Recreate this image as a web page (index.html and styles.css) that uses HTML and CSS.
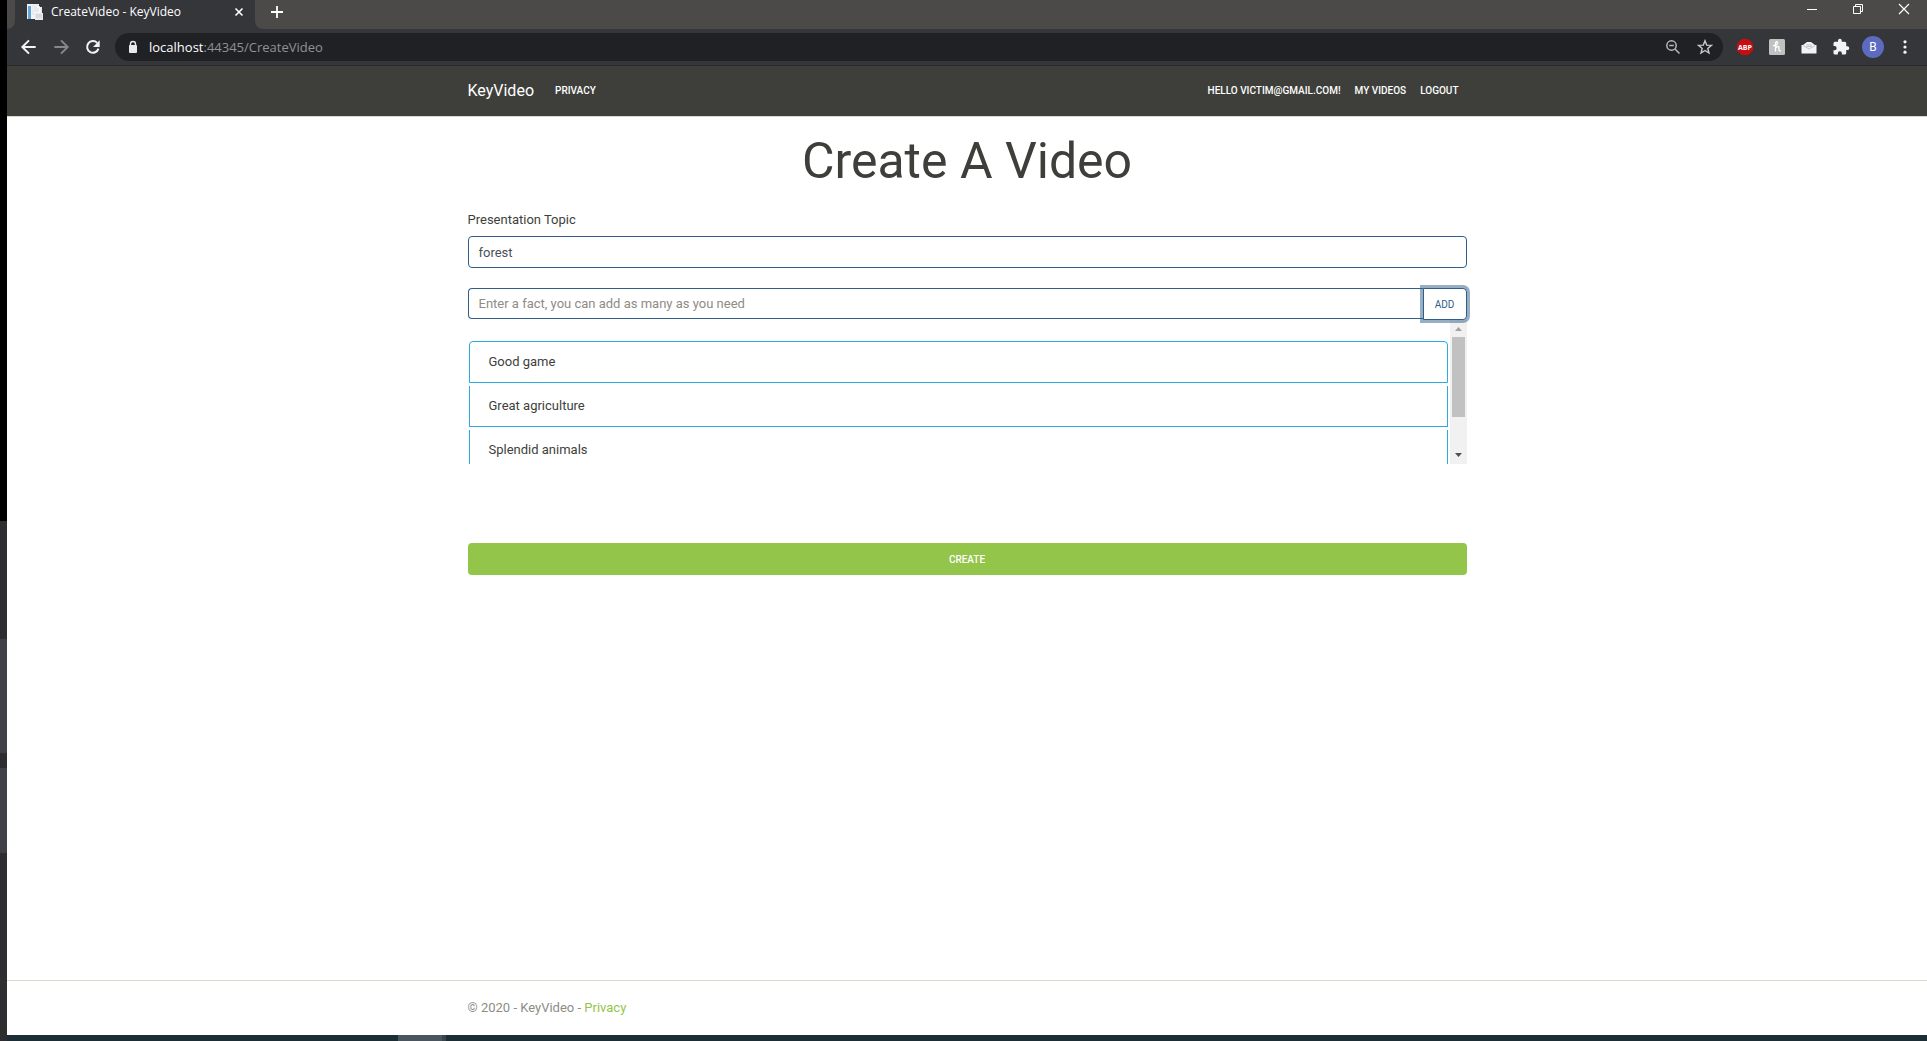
FILE: index.html
```
<!DOCTYPE html>
<html lang="en">
<head>
<meta charset="UTF-8" />
<meta name="viewport" content="width=device-width, initial-scale=1" />
<title>CreateVideo - KeyVideo</title>
<link rel="stylesheet" href="styles.css">
</head>
<body>
  <div class="desktop-edge">
    <span class="edge-black"></span>
    <span class="edge-dark"></span>
    <span class="edge-light"></span>
    <span class="edge-gap"></span>
    <span class="edge-lower"></span>
  </div>

  <div class="window">
    <!-- tab strip -->
    <div class="tab-strip">
      <div class="tab-left"></div>
      <div class="tab">
        <svg width="16" height="16" viewBox="0 0 16 16" aria-hidden="true">
          <path d="M0 0h12v3h3v12H0z" fill="#f1f3f4"/>
          <path d="M1 2h3v13H1z" fill="#5fa8d8"/>
          <path d="M6 1h5l3 3v6H6z" fill="#fafafa" stroke="#d5dade" stroke-width=".6"/>
          <path d="M7 3h3M7 5h5M7 7h5" stroke="#d5dade"/>
          <path d="M8 9h8v7H8z" fill="#e5e9ed"/>
          <path d="M9 11h6M9 13h6" stroke="#c9d0d6"/>
        </svg>
        <span class="tab-title">CreateVideo - KeyVideo</span>
        <button class="tab-close" aria-label="Close tab">
          <svg width="16" height="16" viewBox="0 0 16 16"><path d="M4.500 4.500l7 7M11.500 4.500l-7 7" stroke="#fff" stroke-width="1.600"/></svg>
        </button>
      </div>
      <div class="tab-rest">
        <button class="new-tab" aria-label="New tab">
          <svg width="16" height="16" viewBox="0 0 16 16"><path d="M8 2v12M2 8h12" stroke="#fff" stroke-width="1.800"/></svg>
        </button>
        <div class="window-buttons">
          <button aria-label="Minimize"><svg width="12" height="12" viewBox="0 0 12 12"><path d="M1 6.500h10" stroke="#fff"/></svg></button>
          <button aria-label="Restore"><svg width="12" height="12" viewBox="0 0 12 12" fill="none" stroke="#fff"><path d="M1.500 3.500h7v7h-7zM3.500 3.500v-2h7v7h-2"/></svg></button>
          <button aria-label="Close"><svg width="12" height="12" viewBox="0 0 12 12"><path d="M1 1l10 10M11 1L1 11" stroke="#fff" stroke-width="1.200"/></svg></button>
        </div>
      </div>
    </div>

    <!-- toolbar -->
    <div class="toolbar">
      <button class="icon-btn" aria-label="Back">
        <svg width="20" height="20" viewBox="0 0 24 24" fill="none" stroke="#f1f3f4" stroke-width="2.400"><path d="M20 12H5M12 4l-8 8 8 8"/></svg>
      </button>
      <button class="icon-btn" aria-label="Forward">
        <svg width="20" height="20" viewBox="0 0 24 24" fill="none" stroke="#85878a" stroke-width="2.400"><path d="M4 12h15M12 4l8 8-8 8"/></svg>
      </button>
      <button class="icon-btn" aria-label="Reload">
        <svg width="20" height="20" viewBox="0 0 24 24"><path d="M17 7a7 7 0 1 0 1.600 7" fill="none" stroke="#f1f3f4" stroke-width="2.400"/><path d="M20 4v8h-8z" fill="#f1f3f4"/></svg>
      </button>
      <div class="omnibox">
        <svg width="12" height="14" viewBox="0 0 12 14" aria-hidden="true"><path d="M3.500 6V4a2.500 2.500 0 0 1 5 0v2" fill="none" stroke="#e8eaed" stroke-width="1.400"/><rect x="2" y="5" width="8" height="8" rx="1" fill="#e8eaed"/></svg>
        <span class="url">localhost<span class="url-path">:44345/CreateVideo</span></span>
        <button class="icon-btn" aria-label="Zoom">
          <svg width="16" height="16" viewBox="0 0 16 16" fill="none" stroke="#b5b7ba" stroke-width="1.500"><circle cx="6.500" cy="6.500" r="4.700"/><path d="M10 10l4.500 4.500M4.200 6.500h4.600"/></svg>
        </button>
        <button class="icon-btn" aria-label="Bookmark">
          <svg width="16" height="16" viewBox="0 0 16 16" fill="none" stroke="#c7c9cc" stroke-width="1.400"><path d="M8 1.800l1.700 4.300 4.700.3-3.600 3 1.200 4.600L8 11.500 4 14l1.200-4.600-3.600-3 4.700-.3z"/></svg>
        </button>
      </div>
      <button class="icon-btn" aria-label="ABP">
        <svg width="16" height="16" viewBox="0 0 16 16"><path d="M4.700 0h6.600L16 4.700v6.600L11.300 16H4.700L0 11.300V4.700z" fill="#c70d11"/><text class="abp-text" x="8" y="11" text-anchor="middle" fill="#fff">ABP</text></svg>
      </button>
      <button class="icon-btn" aria-label="Honey">
        <svg width="16" height="16" viewBox="0 0 16 16"><rect width="16" height="16" rx="1.500" fill="#c1c1c1"/><path d="M4 6.500c2.500.5 5-1 4.500-3-.5-1.300-2-.8-2 .8v8.200M6.500 9c1.500-2 3.800-2 3.500 0-.3 1.800-.3 3.500 2 2.800" fill="none" stroke="#fff" stroke-width="1.300"/></svg>
      </button>
      <button class="icon-btn" aria-label="Mail">
        <svg width="16" height="16" viewBox="0 0 16 16"><path d="M.5 6h1.500L6 3h4l4 3h1.500v8.500H.5z" fill="#f1f3f4"/><path d="M2 6.500l6 3.500 6-3.500M5 6h6M5.500 7.500h5" fill="none" stroke="#c3c5c7"/></svg>
      </button>
      <button class="icon-btn" aria-label="Extensions">
        <svg width="18" height="18" viewBox="0 0 24 24"><path d="M20.500 11H19V7a2 2 0 0 0-2-2h-4V3.500a2.500 2.500 0 0 0-5 0V5H4a2 2 0 0 0-2 2v3.800h1.500a2.700 2.700 0 0 1 0 5.400H2V20a2 2 0 0 0 2 2h3.800v-1.500a2.700 2.700 0 0 1 5.400 0V22H17a2 2 0 0 0 2-2v-4h1.500a2.500 2.500 0 0 0 0-5z" fill="#f1f3f4"/></svg>
      </button>
      <button class="icon-btn" aria-label="Profile"><span class="avatar">B</span></button>
      <button class="icon-btn" aria-label="Menu">
        <svg width="16" height="16" viewBox="0 0 16 16" fill="#f1f3f4"><circle cx="8" cy="2.800" r="1.600"/><circle cx="8" cy="8" r="1.600"/><circle cx="8" cy="13.200" r="1.600"/></svg>
      </button>
    </div>

    <header class="navbar">
      <nav class="container nav-row">
        <a class="brand" href="#">KeyVideo</a>
        <a class="nav-link" href="#">Privacy</a>
        <div class="nav-user">
          <a class="nav-link" href="#">Hello victim@gmail.com!</a>
          <a class="nav-link" href="#">My Videos</a>
          <button class="nav-link" type="submit">Logout</button>
        </div>
      </nav>
    </header>

    <main class="container">
      <h1>Create A Video</h1>
      <form>
        <label for="topic">Presentation Topic</label>
        <input class="form-control" id="topic" type="text" value="forest">
        <div class="input-group">
          <input class="form-control" id="fact" type="text" aria-label="Fact" placeholder="Enter a fact, you can add as many as you need">
          <button class="btn-add" type="button">Add</button>
        </div>
        <div class="facts">
          <ul class="fact-list">
            <li>Good game</li>
            <li>Great agriculture</li>
            <li>Splendid animals</li>
          </ul>
          <div class="scrollbar" aria-hidden="true">
            <svg width="17" height="17" viewBox="0 0 17 17"><path d="M5 11h7L8.500 7z" fill="#a3a3a3"/></svg>
            <div class="scroll-thumb"></div>
            <svg width="17" height="17" viewBox="0 0 17 17"><path d="M5 6h7l-3.500 4z" fill="#505050"/></svg>
          </div>
        </div>
        <button class="btn-create" type="submit">Create</button>
      </form>
    </main>

    <footer class="footer">
      <div class="container">&copy; 2020 - KeyVideo - <a href="#">Privacy</a></div>
    </footer>

    <div class="taskbar"><span class="taskbar-item"></span></div>
  </div>
</body>
</html>
```
FILE: styles.css
```
:root {
  --color-primary: #325d88;
  --color-success: #93c54b;
  --color-info: #29abe0;
  --color-dark: #3e3f3a;
  --color-muted: #8e8c84;
  --color-frame: #4c4a48;
  --color-toolbar: #35363a;
  --font-family: Roboto, "Liberation Sans", sans-serif;
  --font-system: "Open Sans", "Noto Sans", sans-serif;
}

* {
  box-sizing: border-box;
}

body {
  margin: 0;
  min-height: 100vh;
  display: flex;
  background: #fff;
  font-family: var(--font-family);
  font-size: 13px;
  line-height: 20px;
  color: var(--color-dark);
}

button {
  margin: 0;
  padding: 0;
  border: 0;
  background: none;
  font-family: inherit;
  cursor: pointer;
}

svg {
  display: block;
  flex: none;
}

/* windows lying behind the browser */
.desktop-edge {
  width: 7px;
  flex: none;
  display: flex;
  flex-direction: column;
  background: #2e2e30;
}

.edge-black {
  height: 50vh;
  background: #000;
}

.edge-dark {
  height: 118px;
}

.edge-light {
  height: 114px;
  background: #404146;
}

.edge-gap {
  height: 15px;
}

.edge-lower {
  height: 85px;
  background: #404146;
}

.window {
  flex: 1;
  min-width: 0;
  display: flex;
  flex-direction: column;
}

/* browser frame */
.tab-strip {
  display: flex;
  height: 29px;
  background: var(--color-toolbar);
}

.tab-left {
  width: 8px;
  background: var(--color-frame);
  border-bottom-right-radius: 8px;
}

.tab {
  width: 240px;
  display: flex;
  align-items: center;
  padding: 0 8px 5px 12px;
}

.tab-title {
  flex: 1;
  margin-left: 8px;
  font-family: var(--font-system);
  font-size: 12px;
  white-space: nowrap;
  color: #fff;
}

.tab-rest {
  flex: 1;
  display: flex;
  justify-content: space-between;
  align-items: flex-start;
  padding-left: 14px;
  background: var(--color-frame);
  border-bottom-left-radius: 8px;
}

.new-tab {
  padding-top: 4px;
}

.window-buttons {
  display: flex;
}

.window-buttons button {
  width: 46px;
  height: 18px;
  display: flex;
  align-items: center;
  justify-content: center;
}

.toolbar {
  height: 37px;
  display: flex;
  align-items: center;
  padding: 0 6px;
  background: var(--color-toolbar);
  border-bottom: 1px solid #28292b;
}

.icon-btn {
  width: 32px;
  height: 28px;
  flex: none;
  display: flex;
  align-items: center;
  justify-content: center;
}

.omnibox {
  flex: 1;
  min-width: 0;
  height: 28px;
  display: flex;
  align-items: center;
  margin: 0 6px;
  padding: 0 2px 0 12px;
  border-radius: 14px;
  background: #202124;
}

.url {
  flex: 1;
  margin-left: 10px;
  font-family: var(--font-system);
  font-size: 13px;
  color: #fff;
}

.url-path {
  color: #8f9296;
}

.abp-text {
  font-family: "Open Sans", sans-serif;
  font-size: 7px;
  font-weight: 700;
}

.avatar {
  width: 22px;
  height: 22px;
  border-radius: 50%;
  background: #5c6bc0;
  color: #fff;
  font-size: 12px;
  line-height: 22px;
}

/* page */
.container {
  width: 100%;
  max-width: 999px;
  margin: 0 auto;
}

.navbar {
  background: var(--color-dark);
  border-bottom: 1px solid #dfd7ca;
}

.nav-row {
  height: 50px;
  display: flex;
  align-items: center;
}

.brand {
  margin-right: 21px;
  font-size: 16px;
  color: #fff;
  text-decoration: none;
}

.nav-link {
  font-size: 10px;
  font-weight: 500;
  line-height: 20px;
  color: #fff;
  text-decoration: none;
  text-transform: uppercase;
}

.nav-user {
  margin-left: auto;
  display: flex;
  gap: 14px;
  padding-right: 8px;
}

h1 {
  margin: 0 0 19px;
  padding-top: 14px;
  font-size: 50px;
  font-weight: 400;
  line-height: 60px;
  text-align: center;
}

label {
  display: block;
  margin-bottom: 6px;
}

.form-control {
  display: block;
  width: 100%;
  height: 32px;
  padding: 0 10px;
  border: 1px solid var(--color-primary);
  border-radius: 4px;
  background: #fff;
  font-family: inherit;
  font-size: 13px;
  color: #495057;
}

.form-control::placeholder {
  color: var(--color-muted);
  opacity: 1;
}

.input-group {
  display: flex;
  align-items: flex-start;
  margin-top: 20px;
}

.input-group .form-control {
  flex: 1;
  min-width: 0;
  height: 31px;
  border-right: 0;
  border-radius: 4px 0 0 4px;
}

.btn-add {
  position: relative;
  z-index: 1;
  width: 44px;
  height: 32px;
  border: 1px solid var(--color-primary);
  border-radius: 0 4px 4px 0;
  background: #fff;
  box-shadow: 0 0 0 3px rgba(50, 93, 136, 0.5);
  font-size: 10px;
  color: var(--color-primary);
  text-transform: uppercase;
}

.facts {
  display: flex;
  height: 144px;
  overflow: hidden;
}

.fact-list {
  flex: 1;
  margin: 0;
  padding: 21px 2px 0 1px;
  list-style: none;
}

.fact-list li {
  margin-bottom: 3px;
  padding: 10px 19px;
  border: 1px solid var(--color-info);
  border-top: 0;
}

.fact-list li:first-child {
  border-top: 1px solid var(--color-info);
  border-radius: 4px 4px 0 0;
}

.scrollbar {
  width: 17px;
  background: #f1f1f1;
  display: flex;
  flex-direction: column;
}

.scroll-thumb {
  height: 80px;
  margin: 0 2px auto;
  background: #c1c1c1;
}

.btn-create {
  display: block;
  width: 100%;
  height: 32px;
  margin-top: 79px;
  border-radius: 4px;
  background: var(--color-success);
  font-size: 10px;
  font-weight: 500;
  color: #fff;
  text-transform: uppercase;
}

.footer {
  margin-top: auto;
  border-top: 1px solid #dfd7ca;
  line-height: 54px;
  color: var(--color-muted);
}

.footer a {
  color: var(--color-success);
  text-decoration: none;
}

.taskbar {
  height: 6px;
  padding-left: 391px;
  background: #1d2d36;
}

.taskbar-item {
  display: block;
  width: 48px;
  height: 6px;
  background: #4b555d;
  border-right: 4px solid #39454d;
}
```
